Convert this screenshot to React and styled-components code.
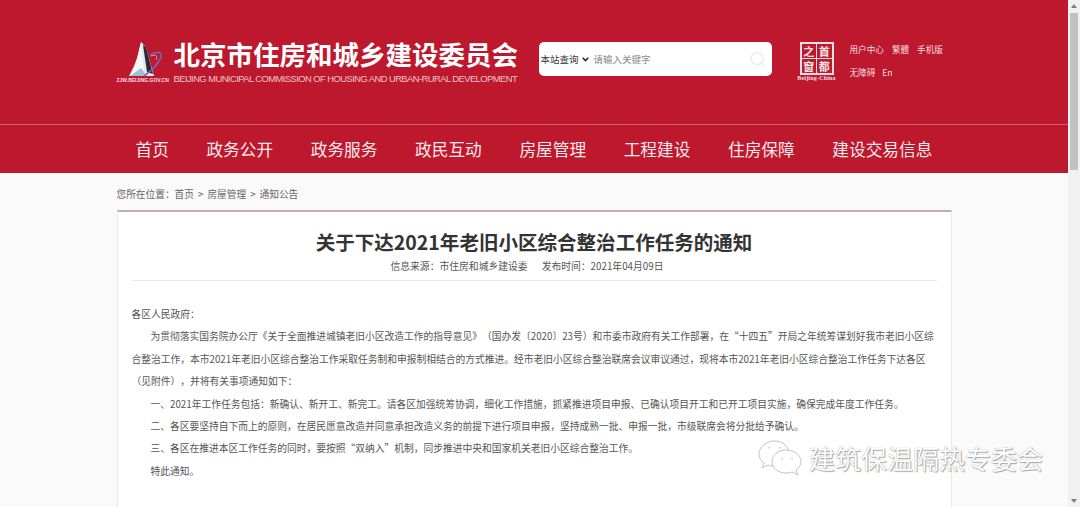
import styled, { createGlobalStyle } from "styled-components";

const NAV = ["首页", "政务公开", "政务服务", "政民互动", "房屋管理", "工程建设", "住房保障", "建设交易信息"];

const GlobalStyle = createGlobalStyle`
  html, body {
    margin: 0;
    height: 507px;
    overflow: hidden;
    background: #fff;
  }
  * { box-sizing: border-box; }
`;

const Shell = styled.div`
  display: flex;
  width: 1080px;
  height: 507px;
  overflow: hidden;
  position: relative;
  font-family: "Noto Sans CJK SC", "Liberation Sans", sans-serif;
`;

const Page = styled.div`
  width: 1068px;
  height: 507px;
  overflow: hidden;
  background: #fafafa;
`;

const Scrollbar = styled.div`
  width: 12px;
  height: 507px;
  background: #f1f1f1;
  display: flex;
  flex-direction: column;
  align-items: center;
  padding: 4px 0;
`;

const Arrow = styled.div`
  width: 0;
  height: 0;
  border-left: 3px solid transparent;
  border-right: 3px solid transparent;
  border-${(p) => (p.$down ? "top" : "bottom")}: 4px solid #7d7d7d;
`;

const Thumb = styled.div`
  width: 8px;
  height: 157px;
  margin-top: 5px;
  background: #c1c1c1;
`;

const Track = styled.div`
  flex: 1;
`;

const Header = styled.header`
  height: 125px;
  background: #bd182d;
  border-bottom: 1px solid #d9596a;
`;

const HeaderInner = styled.div`
  width: 835px;
  margin: 0 auto;
  padding-top: 36px;
  display: flex;
  align-items: flex-start;
`;

const LogoBox = styled.div`
  width: 57px;
  height: 50px;
  flex: none;
  display: flex;
  flex-direction: column;
  align-items: flex-start;
`;

const LogoUrl = styled.span`
  font: 700 5px/7px "Liberation Sans", sans-serif;
  color: #f3dfe2;
  white-space: nowrap;
  margin-top: -1px;
`;

const Titles = styled.div`
  width: 365px;
  flex: none;
`;

const SiteName = styled.div`
  font-size: 26.5px;
  font-weight: 700;
  line-height: 34px;
  margin-top: 1px;
  color: #fff;
  white-space: nowrap;
`;

const SiteNameEn = styled.div`
  font: 9.4px/12px "Liberation Sans", sans-serif;
  letter-spacing: -0.55px;
  margin-top: 2px;
  color: #eec5cb;
  white-space: nowrap;
`;

const SearchBox = styled.div`
  width: 233px;
  height: 34px;
  margin-top: 6px;
  flex: none;
  background: #fff;
  border-radius: 5px;
  display: flex;
  align-items: center;
  padding: 0 6px 0 2px;
  font-size: 9.5px;
`;

const ScopeLabel = styled.span`
  color: #333;
  white-space: nowrap;
`;

const Placeholder = styled.span`
  flex: 1;
  margin-left: 5px;
  color: #8a8a8a;
  white-space: nowrap;
`;

const Seal = styled.div`
  width: 38px;
  margin: 6px 0 0 26px;
  flex: none;
  display: flex;
  flex-direction: column;
  align-items: center;
`;

const SealGrid = styled.div`
  width: 34px;
  height: 33px;
  border: 2px solid #f3dfe2;
  display: grid;
  grid-template-columns: 1fr 1fr;
  grid-template-rows: 1fr 1fr;
  gap: 1px;
  background: #f3dfe2;
`;

const SealCell = styled.span`
  background: #bd182d;
  color: #f6e4e7;
  font: 700 11px/14px "Noto Sans CJK SC", sans-serif;
  text-align: center;
  overflow: hidden;
`;

const SealCaption = styled.span`
  font: 700 6px/7px "Liberation Serif", serif;
  letter-spacing: 0.2px;
  color: #f3dfe2;
  white-space: nowrap;
`;

const UtilLinks = styled.div`
  margin: 7px 0 0 14px;
  display: grid;
  grid-template-columns: repeat(3, auto);
  justify-content: start;
  column-gap: 8px;
  row-gap: 10px;
  font-size: 8.6px;
  line-height: 13px;
  color: #f6dce0;
  white-space: nowrap;
`;

const UtilLink = styled.span``;

const UtilRow = styled.div`
  grid-column: 1 / -1;
  display: flex;
  gap: 7px;
`;

const Nav = styled.nav`
  height: 48px;
  background: #bd182d;
`;

const NavInner = styled.div`
  width: 835px;
  margin: 0 auto;
  padding: 0 19px 0 19px;
  height: 100%;
  display: flex;
  justify-content: space-between;
  align-items: center;
  color: #f9e9eb;
  font-size: 16.7px;
  white-space: nowrap;
`;

const Main = styled.main`
  width: 835px;
  margin: 0 auto;
`;

const Crumb = styled.div`
  height: 37px;
  padding-top: 14px;
  display: flex;
  gap: 4px;
  font-size: 9.7px;
  line-height: 14px;
  color: #666;
  white-space: nowrap;
`;

const CrumbPart = styled.span``;

const Article = styled.article`
  background: #fff;
  border: 1px solid #e9e9e9;
  border-top: 2px solid #c4aeb2;
  height: 320px;
  padding: 0 14px;
`;

const Title = styled.h1`
  margin: 16px 0 0;
  font-size: 19.55px;
  line-height: 28px;
  font-weight: 700;
  color: #333;
  text-align: center;
  white-space: nowrap;
`;

const Meta = styled.div`
  margin-top: 2px;
  padding: 0 14px 6px 0;
  border-bottom: 1px solid #e8e8e8;
  display: flex;
  justify-content: center;
  gap: 14px;
  font-size: 9.8px;
  line-height: 16px;
  color: #555;
`;

const Body = styled.div`
  padding-top: 22px;
  font-size: 9.75px;
  line-height: 22.4px;
  color: #555;
  text-spacing-trim: space-all;
`;

const Para = styled.p`
  margin: 0;
  text-indent: ${(p) => (p.$flush ? "0" : "19px")};
  white-space: nowrap;
`;

const Watermark = styled.div`
  position: absolute;
  left: 758px;
  top: 440px;
  display: flex;
  align-items: center;
  gap: 7px;
  font-size: 26px;
  line-height: 36px;
  color: #fff;
  text-shadow: 0 0 1px #888, 1px 1px 1px #aaa;
  white-space: nowrap;
`;

const Logo = () => (
  <svg width="50" height="42" viewBox="0 0 50 42">
    <path d="M24 6 L29 11 L37 40 L12 40 L17 30 L20 22 Z" fill="#e6e9ee" />
    <path d="M26 9 L29 11 L36 38 L30 36 Z" fill="#2a2b36" />
    <path d="M24 6 L27 36 L14 40 L20 24 Z" fill="#f6f7f9" />
    <path d="M13 40 L24 32 L30 40 Z" fill="#9cc3cc" />
    <path d="M33 19 C43 13 47 18 42 25 C38 31 33 36 27 40" fill="none" stroke="#7468b8" strokeWidth="1.6" />
    <path d="M34 20 C39 18 41 20 39 24" fill="none" stroke="#d3b3cc" strokeWidth="0.9" />
  </svg>
);

const SearchIcon = () => (
  <svg width="17" height="17" viewBox="0 0 17 17" fill="none" stroke="#e9e9e9" strokeWidth="1.2">
    <circle cx="8" cy="7.5" r="6" />
    <path d="M12.4 12 L15 15" />
  </svg>
);

const ChevronIcon = () => (
  <svg width="7" height="5" viewBox="0 0 7 5" fill="none" stroke="#222" strokeWidth="1.5" style={{ marginLeft: 3, flex: "none" }}>
    <path d="M0.7 0.8 L3.5 3.6 L6.3 0.8" />
  </svg>
);

const WeChatIcon = () => (
  <svg width="44" height="36" viewBox="0 0 44 36" fill="#fff" stroke="#bcbcbc" strokeWidth="0.9">
    <path d="M17 1 C8 1 1 7 1 14 C1 18 3 21 6 23 L4 28 L10 25 C12 26 14 26 16 26 C24 26 31 20 31 14 C31 7 25 1 17 1 Z" />
    <path d="M28 10 C20 10 14 15 14 22 C14 28 20 33 28 33 C30 33 32 33 34 32 L40 35 L38 30 C41 28 43 25 43 22 C43 15 36 10 28 10 Z" />
    <path d="M10 8 Q11 7 12 8 M21 8 Q22 7 23 8 M23 19 Q24 18 25 19 M33 19 Q34 18 35 19" fill="none" />
  </svg>
);

const App = () => {
  return (
    <Shell>
      <GlobalStyle />
      <Page>
        <Header>
          <HeaderInner>
            <LogoBox>
              <Logo />
              <LogoUrl>ZJW.BEIJING.GOV.CN</LogoUrl>
            </LogoBox>
            <Titles>
              <SiteName>北京市住房和城乡建设委员会</SiteName>
              <SiteNameEn>BEIJING MUNICIPAL COMMISSION OF HOUSING AND URBAN-RURAL DEVELOPMENT</SiteNameEn>
            </Titles>
            <SearchBox>
              <ScopeLabel>本站查询</ScopeLabel>
              <ChevronIcon />
              <Placeholder>请输入关键字</Placeholder>
              <SearchIcon />
            </SearchBox>
            <Seal>
              <SealGrid>
                <SealCell>之</SealCell>
                <SealCell>首</SealCell>
                <SealCell>窗</SealCell>
                <SealCell>都</SealCell>
              </SealGrid>
              <SealCaption>Beijing-China</SealCaption>
            </Seal>
            <UtilLinks>
              <UtilLink>用户中心</UtilLink>
              <UtilLink>繁體</UtilLink>
              <UtilLink>手机版</UtilLink>
              <UtilRow>
                <UtilLink>无障碍</UtilLink>
                <UtilLink>En</UtilLink>
              </UtilRow>
            </UtilLinks>
          </HeaderInner>
        </Header>
        <Nav>
          <NavInner>
            {NAV.map((item) => (
              <span key={item}>{item}</span>
            ))}
          </NavInner>
        </Nav>
        <Main>
          <Crumb>
            <CrumbPart>您所在位置：首页</CrumbPart>
            <CrumbPart>&gt;</CrumbPart>
            <CrumbPart>房屋管理</CrumbPart>
            <CrumbPart>&gt;</CrumbPart>
            <CrumbPart>通知公告</CrumbPart>
          </Crumb>
          <Article>
            <Title>关于下达2021年老旧小区综合整治工作任务的通知</Title>
            <Meta>
              <span>信息来源：市住房和城乡建设委</span>
              <span>发布时间：2021年04月09日</span>
            </Meta>
            <Body>
              <Para $flush>各区人民政府：</Para>
              <Para>为贯彻落实国务院办公厅《关于全面推进城镇老旧小区改造工作的指导意见》（国办发〔2020〕23号）和市委市政府有关工作部署，在“十四五”开局之年统筹谋划好我市老旧小区综</Para>
              <Para $flush>合整治工作，本市2021年老旧小区综合整治工作采取任务制和申报制相结合的方式推进。经市老旧小区综合整治联席会议审议通过，现将本市2021年老旧小区综合整治工作任务下达各区</Para>
              <Para $flush>（见附件），并将有关事项通知如下：</Para>
              <Para>一、2021年工作任务包括：新确认、新开工、新完工。请各区加强统筹协调，细化工作措施，抓紧推进项目申报、已确认项目开工和已开工项目实施，确保完成年度工作任务。</Para>
              <Para>二、各区要坚持自下而上的原则，在居民愿意改造并同意承担改造义务的前提下进行项目申报，坚持成熟一批、申报一批，市级联席会将分批给予确认。</Para>
              <Para>三、各区在推进本区工作任务的同时，要按照“双纳入”机制，同步推进中央和国家机关老旧小区综合整治工作。</Para>
              <Para>特此通知。</Para>
            </Body>
          </Article>
        </Main>
      </Page>
      <Scrollbar>
        <Arrow />
        <Thumb />
        <Track />
        <Arrow $down />
      </Scrollbar>
      <Watermark>
        <WeChatIcon />
        <span>建筑保温隔热专委会</span>
      </Watermark>
    </Shell>
  );
};

export default App;
